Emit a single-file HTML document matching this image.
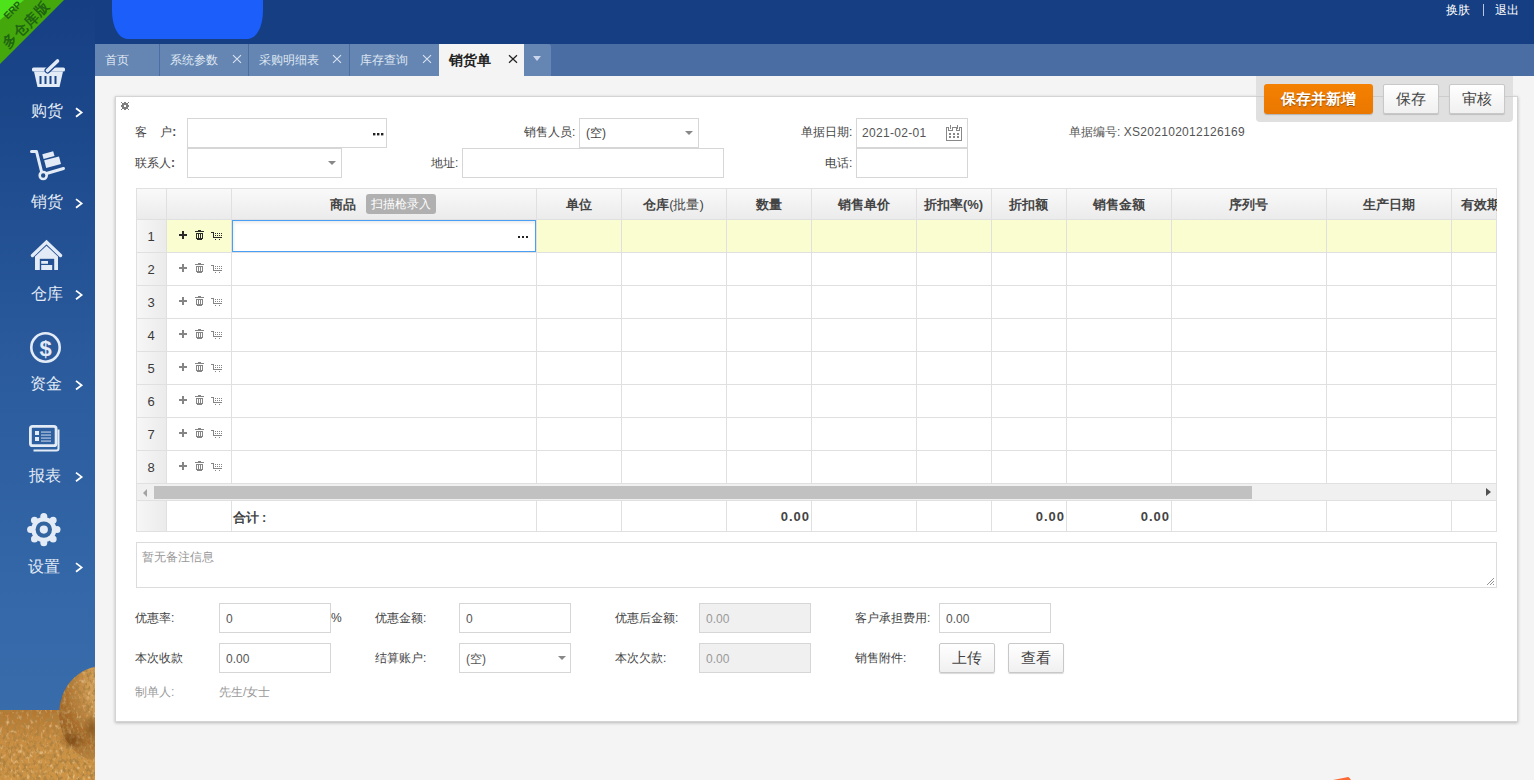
<!DOCTYPE html>
<html><head><meta charset="utf-8">
<style>
*{margin:0;padding:0;box-sizing:border-box}
html,body{width:1534px;height:780px;overflow:hidden}
body{background:#f4f4f4;font-family:"Liberation Sans",sans-serif;font-size:12px;color:#333;position:relative}
.abs{position:absolute}
#top{left:0;top:0;width:1534px;height:44px;background:#163f83}
#blob{left:112px;top:-20px;width:151px;height:59px;background:#1c5efa;border-radius:0 0 15px 15px / 0 0 28px 28px}
.tr{top:3px;color:#fff;font-size:12px;line-height:14px}
#topr{top:3px;right:14px;color:#fff;font-size:12px;line-height:14px}
#side{left:0;top:0;width:95px;height:780px;background:linear-gradient(#163f83 0px,#1d4a8c 150px,#2a5a9c 350px,#3468a8 600px,#3a6eac 780px);overflow:hidden}
#tabbar{left:95px;top:44px;width:1439px;height:32px;background:#4a6da3}
.tab{position:absolute;top:0;height:32px;background:#6586b3;color:#dfe7f2;line-height:32px;padding-left:10px;font-size:12px}
.tab .x{position:absolute;right:6px;top:0;font-size:14px;color:#e8eef6}
#card{left:115px;top:96px;width:1403px;height:626px;background:#fff;border:1px solid #d4d4d4;box-shadow:0 1px 3px rgba(0,0,0,.25)}
.lbl{position:absolute;font-size:12px;color:#444;line-height:14px;white-space:nowrap}
.caret{position:absolute;top:12px;width:0;height:0;border-left:4px solid transparent;border-right:4px solid transparent;border-top:4px solid #888}
.btn-o{background:linear-gradient(#f58102,#ea7700);box-shadow:0 1px 1px rgba(0,0,0,.2);border-radius:3px;color:#fff;font-size:15px;font-weight:bold;text-align:center;line-height:30px;text-shadow:0 1px 1px rgba(0,0,0,.35)}
.btn{background:linear-gradient(#fff,#f0f0f0);border:1px solid #c8c8c8;border-radius:2px;color:#444;font-size:15px;text-align:center;line-height:28px;box-shadow:0 1px 1px rgba(0,0,0,.15)}
.hl{left:0;height:1px;background:#e0e0e0}
.vl{width:1px;background:#e0e0e0}
.th{height:31px;line-height:33px;text-align:center;font-weight:bold;font-size:13px;color:#444}
.badge{background:#b0b0b0;border-radius:3px;color:#fff;font-size:12px;line-height:20px;text-align:center}
.rn{text-align:center;line-height:35px;font-size:13px;color:#3a3a3a}
.tf{height:31px;line-height:33px;font-weight:bold;font-size:13px;color:#444}
.iv{position:absolute;left:6px;top:8px;color:#555;font-size:12px;line-height:14px}
.inp.dis{background:#f0f0f0}
.snav{position:absolute;color:#e3ebf6;font-size:16px;line-height:18px;white-space:nowrap}
.chev{position:absolute;left:74px;width:6px;height:6px;border-right:1.6px solid #fff;border-top:1.6px solid #fff;transform:rotate(45deg)}
.inp{position:absolute;border:1px solid #d6d6d6;background:#fff;height:30px}
</style></head><body>
<div id="top" class="abs"></div>
<div id="blob" class="abs"></div>
<div class="abs tr" style="left:1446px">换肤</div><div class="abs" style="left:1483px;top:4px;width:1px;height:12px;background:#b8c6de"></div><div class="abs tr" style="left:1495px">退出</div>
<div id="side" class="abs">
<svg class="abs" style="left:0;top:0" width="95" height="780" viewBox="0 0 95 780">
<defs>
<linearGradient id="hay" x1="0" y1="0" x2="0" y2="1"><stop offset="0" stop-color="#c8913f"/><stop offset="0.4" stop-color="#d9a85a"/><stop offset="1" stop-color="#c98e3c"/></linearGradient>
<radialGradient id="bale" cx="0.45" cy="0.35" r="0.7"><stop offset="0" stop-color="#e2bb78"/><stop offset="0.6" stop-color="#c99447"/><stop offset="1" stop-color="#9a6424"/></radialGradient>
<filter id="tex"><feTurbulence type="fractalNoise" baseFrequency="0.35" numOctaves="2" seed="3"/><feColorMatrix values="0 0 0 0 0.45  0 0 0 0 0.28  0 0 0 0 0.05  0 0 0 -1.6 0.9"/><feComposite in2="SourceGraphic" operator="in"/></filter>
</defs>
<!-- ERP ribbon -->
<polygon points="0,0 64,0 0,64" fill="#44a80c"/>
<polygon points="0,0 24,0 0,20" fill="#4ee21b"/>
<g transform="translate(12.5,10) rotate(-45)"><text x="0" y="3.5" text-anchor="middle" font-family="Liberation Sans" font-size="10" font-weight="bold" fill="#1f6512">ERP</text></g>
<g transform="translate(26,24) rotate(-45)"><text x="0" y="5" text-anchor="middle" font-size="14" font-weight="bold" fill="#1f6512" letter-spacing="1">多仓库版</text></g>
<!-- basket -->
<g fill="#e3ebf6">
<rect x="32" y="67.5" width="33" height="4" rx="1.5"/>
<path d="M34 71.5H63L59.5 87H37.5Z"/>
</g>
<g fill="#1b468a"><rect x="39.5" y="76" width="2" height="8"/><rect x="44.5" y="76" width="2" height="8"/><rect x="49.5" y="76" width="2" height="8"/><rect x="54.5" y="76" width="2" height="8"/></g>
<path d="M47.5 70.5L57.5 61" stroke="#1b468a" stroke-width="6" stroke-linecap="round"/>
<path d="M47.5 70.5L57.5 61" stroke="#e3ebf6" stroke-width="3.6" stroke-linecap="round"/>
<!-- hand truck -->
<g stroke="#e3ebf6" fill="none" stroke-linecap="round" stroke-linejoin="round">
<path d="M31.5 151.5H36.5L41.5 171.5" stroke-width="3"/>
<path d="M46.5 173.5L63.5 168.5" stroke-width="3"/>
<circle cx="43.2" cy="175.5" r="3.5" stroke-width="2.6"/>
</g>
<g fill="#e3ebf6">
<path d="M42.3 154.2L53.2 151.3L54.5 156L43.6 158.9Z"/>
<path d="M44.2 160.3L59 156.4L61 164L46.2 167.9Z"/>
</g>
<!-- house -->
<path d="M32.5 255.5L46.5 242L60.5 255.5" stroke="#e3ebf6" stroke-width="3.4" fill="none" stroke-linecap="round" stroke-linejoin="miter"/>
<path d="M35 256.5L46.5 245.8L58 256.5V270H35Z" fill="#e3ebf6"/>
<rect x="39.8" y="258.8" width="14.4" height="11.2" fill="#235193"/>
<rect x="41.2" y="261" width="6.8" height="2.8" fill="#e3ebf6"/>
<rect x="41.2" y="265" width="11" height="5" fill="#e3ebf6"/>
<!-- dollar -->
<circle cx="45.5" cy="347.5" r="14.2" stroke="#e3ebf6" stroke-width="2.6" fill="none"/>
<text x="45.5" y="356" text-anchor="middle" font-family="Liberation Sans" font-weight="bold" font-size="22" fill="#e3ebf6">$</text>
<!-- report -->
<path d="M58.5 429.5V448.5a2 2 0 0 1-2 2H33.5" stroke="#e3ebf6" stroke-width="2" fill="none"/>
<rect x="30.4" y="426.4" width="25.7" height="19.2" rx="2.2" stroke="#e3ebf6" stroke-width="2.8" fill="none"/>
<g fill="#e3ebf6"><rect x="35" y="431" width="4" height="4"/><rect x="35" y="437" width="4" height="4"/>
<rect x="41" y="431.6" width="10" height="0.9"/><rect x="41" y="434.6" width="10" height="0.9"/><rect x="41" y="437.6" width="10" height="0.9"/><rect x="41" y="440.6" width="10" height="0.9"/></g>
<!-- gear -->
<g fill="#e3ebf6" transform="translate(43.8,529.6)">
<circle r="12.6"/>
<circle cx="0" cy="-13.2" r="3.5"/><circle cx="0" cy="13.2" r="3.5"/><circle cx="13.2" cy="0" r="3.5"/><circle cx="-13.2" cy="0" r="3.5"/>
<circle cx="9.33" cy="9.33" r="3.5"/><circle cx="-9.33" cy="9.33" r="3.5"/><circle cx="9.33" cy="-9.33" r="3.5"/><circle cx="-9.33" cy="-9.33" r="3.5"/>
<circle r="8.2" fill="#32649f"/>
<circle r="4.1"/>
</g>
<!-- chev --><path d="M76 108.2L81.6 112.5L76 116.8" stroke="#fff" stroke-width="1.8" fill="none"/><path d="M76 199.1L81.6 203.4L76 207.70000000000002" stroke="#fff" stroke-width="1.8" fill="none"/><path d="M76 290.59999999999997L81.6 294.9L76 299.2" stroke="#fff" stroke-width="1.8" fill="none"/><path d="M76 380.9L81.6 385.2L76 389.5" stroke="#fff" stroke-width="1.8" fill="none"/><path d="M76 472.59999999999997L81.6 476.9L76 481.2" stroke="#fff" stroke-width="1.8" fill="none"/><path d="M76 563.1L81.6 567.4L76 571.6999999999999" stroke="#fff" stroke-width="1.8" fill="none"/>
<!-- hay -->
<defs>
<linearGradient id="hay2" x1="0" y1="0" x2="0" y2="1"><stop offset="0" stop-color="#b27630"/><stop offset="0.45" stop-color="#c98e42"/><stop offset="1" stop-color="#cd9446"/></linearGradient>
<radialGradient id="bale2" cx="0.75" cy="0.2" r="0.85"><stop offset="0" stop-color="#e2bc7c"/><stop offset="0.5" stop-color="#cf9a52"/><stop offset="0.82" stop-color="#a86c2a"/><stop offset="1" stop-color="#9c6226"/></radialGradient>
<filter id="tex2" x="0" y="0" width="100%" height="100%"><feTurbulence type="fractalNoise" baseFrequency="0.3 0.22" numOctaves="3" seed="7" result="n"/><feColorMatrix in="n" type="matrix" values="0 0 0 0 0.42  0 0 0 0 0.22  0 0 0 0 0.05  3.4 0 0 0 -1.5" result="d"/><feComposite in="d" in2="SourceAlpha" operator="in"/></filter>
<filter id="tex3" x="0" y="0" width="100%" height="100%"><feTurbulence type="fractalNoise" baseFrequency="0.3 0.2" numOctaves="2" seed="11" result="n"/><feColorMatrix in="n" type="matrix" values="0 0 0 0 0.97  0 0 0 0 0.85  0 0 0 0 0.6  1.6 0 0 0 -0.88" result="d"/><feComposite in="d" in2="SourceAlpha" operator="in"/></filter>
</defs>
<g id="hayshape">
<rect x="0" y="710" width="95" height="70" fill="url(#hay2)"/>
<ellipse cx="103" cy="714" rx="44" ry="48" fill="url(#bale2)"/>
</g>
<linearGradient id="fadeg" x1="0" y1="0" x2="0" y2="1"><stop offset="0" stop-color="#cd9446" stop-opacity="0"/><stop offset="0.6" stop-color="#cd9446" stop-opacity="0.9"/><stop offset="1" stop-color="#cd9446" stop-opacity="1"/></linearGradient><rect x="40" y="742" width="55" height="38" fill="url(#fadeg)"/>
<g filter="url(#tex3)"><rect x="0" y="710" width="95" height="70" fill="#000"/><ellipse cx="103" cy="714" rx="44" ry="48" fill="#000"/></g>
<g filter="url(#tex2)"><rect x="0" y="710" width="95" height="70" fill="#000"/><ellipse cx="103" cy="714" rx="44" ry="48" fill="#000"/></g>
<radialGradient id="shad" cx="0.5" cy="0.5" r="0.5"><stop offset="0" stop-color="#6a3c0c" stop-opacity="0.55"/><stop offset="1" stop-color="#6a3c0c" stop-opacity="0"/></radialGradient><ellipse cx="72" cy="740" rx="14" ry="10" fill="url(#shad)"/><ellipse cx="92" cy="728" rx="10" ry="14" fill="url(#shad)"/>
</svg>
<div class="snav" style="top:102px;left:31px">购货</div>
<div class="snav" style="top:193px;left:31px">销货</div>
<div class="snav" style="top:285px;left:31px">仓库</div>
<div class="snav" style="top:375px;left:30px">资金</div>
<div class="snav" style="top:467px;left:29px">报表</div>
<div class="snav" style="top:558px;left:28px">设置</div>
</div>
<div id="tabbar" class="abs">
<div class="tab" style="left:0;width:64px">首页</div>
<div class="tab" style="left:65px;width:88px">系统参数</div><svg class="abs" style="left:137px;top:10px" width="10" height="10" viewBox="0 0 10 10"><path d="M1 1.2L9 8.8M9 1.2L1 8.8" stroke="#dbe4f2" stroke-width="1.1"/></svg>
<div class="tab" style="left:154px;width:100px">采购明细表</div><svg class="abs" style="left:237px;top:10px" width="10" height="10" viewBox="0 0 10 10"><path d="M1 1.2L9 8.8M9 1.2L1 8.8" stroke="#dbe4f2" stroke-width="1.1"/></svg>
<div class="tab" style="left:255px;width:89px">库存查询</div><svg class="abs" style="left:327px;top:10px" width="10" height="10" viewBox="0 0 10 10"><path d="M1 1.2L9 8.8M9 1.2L1 8.8" stroke="#dbe4f2" stroke-width="1.1"/></svg>
<div class="tab" style="left:344px;width:85px;background:#f4f4f4;color:#222;font-size:14px;font-weight:bold;padding-left:10px">销货单</div><svg class="abs" style="left:413px;top:10px" width="10" height="10" viewBox="0 0 10 10"><path d="M1 1.2L9 8.8M9 1.2L1 8.8" stroke="#222" stroke-width="1.2"/></svg>
<div class="tab" style="left:429px;width:27px;border-radius:0 3px 0 0"></div><div class="abs" style="left:438px;top:12px;width:0;height:0;border-left:4px solid transparent;border-right:4px solid transparent;border-top:5px solid #c9d6ec"></div>
</div>
<div id="card" class="abs"></div>

<svg class="abs" style="left:121px;top:102px" width="8" height="8" viewBox="0 0 8 8" shape-rendering="crispEdges"><g fill="#7d7d7d"><rect x="1" y="1" width="6" height="6"/><rect x="3" y="0" width="2" height="1"/><rect x="3" y="7" width="2" height="1"/><rect x="0" y="3" width="1" height="2"/><rect x="7" y="3" width="1" height="2"/><rect x="0" y="0" width="1" height="1"/><rect x="7" y="0" width="1" height="1"/><rect x="0" y="7" width="1" height="1"/><rect x="7" y="7" width="1" height="1"/></g><rect x="3" y="3" width="2" height="2" fill="#fff"/></svg>
<div class="lbl" style="left:135px;top:125px">客&nbsp;&nbsp;&nbsp;&nbsp;户<b style="font-weight:bold">:</b></div>
<div class="inp" style="left:187px;top:118px;width:200px;height:30px"><svg style="position:absolute;left:185px;top:14px" width="11" height="3" viewBox="0 0 11 3"><rect x="0" y="0" width="2.4" height="2.4" fill="#222"/><rect x="4" y="0" width="2.4" height="2.4" fill="#222"/><rect x="8" y="0" width="2.4" height="2.4" fill="#222"/></svg></div>
<div class="lbl" style="left:135px;top:156px">联系人<b>:</b></div>
<div class="inp" style="left:187px;top:148px;width:155px;height:30px"><span class="caret" style="left:140px"></span></div>
<div class="lbl" style="left:431px;top:156px">地址:</div>
<div class="inp" style="left:462px;top:148px;width:262px;height:30px"></div>
<div class="lbl" style="left:524px;top:125px">销售人员:</div>
<div class="inp" style="left:579px;top:118px;width:120px;height:30px"><span style="position:absolute;left:6px;top:6px;color:#444">(空)</span><span class="caret" style="left:105px"></span></div>
<div class="lbl" style="left:801px;top:125px">单据日期:</div>
<div class="inp" style="left:856px;top:118px;width:112px;height:30px"><span style="position:absolute;left:5px;top:7px;color:#555;letter-spacing:0.3px">2021-02-01</span><svg style="position:absolute;left:88px;top:5px" width="18" height="18" viewBox="0 0 18 18"><path d="M1.5 3.5H3.5V6.5H7V3.5H11V6.5H14.5V3.5H16.5V16.5H1.5Z" stroke="#888" stroke-width="1" fill="none" shape-rendering="crispEdges"/><path d="M5.5 1V4.5M12.5 1V4.5" stroke="#888" stroke-width="1" shape-rendering="crispEdges"/><g fill="#888"><rect x="4" y="9" width="2" height="2"/><rect x="8" y="9" width="2" height="2"/><rect x="12" y="9" width="2" height="2"/><rect x="4" y="12" width="2" height="2"/><rect x="8" y="12" width="2" height="2"/><rect x="12" y="12" width="2" height="2"/></g></svg></div>
<div class="lbl" style="left:825px;top:156px">电话:</div>
<div class="inp" style="left:856px;top:148px;width:112px;height:30px"></div>
<div class="lbl" style="left:1069px;top:125px;color:#555">单据编号: <span style="letter-spacing:0.3px">XS202102012126169</span></div>


<div class="abs" style="left:1256px;top:76px;width:257px;height:46px;background:#e0e0e0;border-radius:0 0 4px 4px"></div>
<div class="abs" style="left:1256px;top:96px;width:257px;height:1px;background:#cdcdcd"></div>
<div class="abs btn-o" style="left:1264px;top:84px;width:109px;height:30px">保存并新增</div>
<div class="abs btn" style="left:1383px;top:84px;width:56px;height:30px">保存</div>
<div class="abs btn" style="left:1449px;top:84px;width:56px;height:30px">审核</div>

<div class="abs" style="left:136px;top:542px;width:1361px;height:46px;border:1px solid #dcdcdc;background:#fff">
<span style="position:absolute;left:5px;top:6px;color:#999;font-size:12px">暂无备注信息</span>
<svg style="position:absolute;right:1px;bottom:1px" width="9" height="9" viewBox="0 0 9 9"><path d="M8 1L1 8M8 4L4 8M8 7L7 8" stroke="#888" stroke-width="0.9"/></svg>
</div>
<div class="lbl" style="left:135px;top:611px">优惠率:</div>
<div class="inp" style="left:219px;top:603px;width:112px;height:30px"><span class="iv">0</span></div>
<div class="lbl" style="left:331px;top:611px">%</div>
<div class="lbl" style="left:375px;top:611px">优惠金额:</div>
<div class="inp" style="left:459px;top:603px;width:112px;height:30px"><span class="iv">0</span></div>
<div class="lbl" style="left:615px;top:611px">优惠后金额:</div>
<div class="inp dis" style="left:699px;top:603px;width:112px;height:30px"><span class="iv" style="color:#999">0.00</span></div>
<div class="lbl" style="left:855px;top:611px">客户承担费用:</div>
<div class="inp" style="left:939px;top:603px;width:112px;height:30px"><span class="iv">0.00</span></div>

<div class="lbl" style="left:135px;top:651px">本次收款</div>
<div class="inp" style="left:219px;top:643px;width:112px;height:30px"><span class="iv">0.00</span></div>
<div class="lbl" style="left:375px;top:651px">结算账户:</div>
<div class="inp" style="left:459px;top:643px;width:112px;height:30px"><span class="iv">(空)</span><span class="caret" style="left:98px"></span></div>
<div class="lbl" style="left:615px;top:651px">本次欠款:</div>
<div class="inp dis" style="left:699px;top:643px;width:112px;height:30px"><span class="iv" style="color:#999">0.00</span></div>
<div class="lbl" style="left:855px;top:651px">销售附件:</div>
<div class="abs btn" style="left:939px;top:643px;width:56px;height:30px">上传</div>
<div class="abs btn" style="left:1008px;top:643px;width:56px;height:30px">查看</div>

<div class="lbl" style="left:135px;top:685px;color:#999">制单人:</div>
<div class="lbl" style="left:219px;top:685px;color:#999">先生/女士</div>

<svg class="abs" style="left:1330px;top:774px" width="24" height="6" viewBox="0 0 24 6"><path d="M3 6L17 3.2Q18.5 2.6 19.5 4L21 6Z" fill="#fb6a35"/></svg>
<!--TABLE-->
<div class="abs" style="left:136px;top:188px;width:1361px;height:344px;overflow:hidden;background:#fff">
<div class="abs" style="left:0;top:0;width:1361px;height:31px;background:linear-gradient(#fafafa,#ebebeb)"></div>
<div class="abs" style="left:0;top:31px;width:30px;height:264px;background:linear-gradient(90deg,#f7f7f7,#ebebeb)"></div>
<div class="abs" style="left:0;top:312px;width:30px;height:31px;background:linear-gradient(90deg,#f7f7f7,#ebebeb)"></div>
<div class="abs" style="left:30px;top:31px;width:1361px;height:33px;background:#f9fdd0"></div>
<div class="abs hl" style="top:0px;width:1361px"></div>
<div class="abs hl" style="top:31px;width:1361px"></div>
<div class="abs hl" style="top:64px;width:1361px"></div>
<div class="abs hl" style="top:97px;width:1361px"></div>
<div class="abs hl" style="top:130px;width:1361px"></div>
<div class="abs hl" style="top:163px;width:1361px"></div>
<div class="abs hl" style="top:196px;width:1361px"></div>
<div class="abs hl" style="top:229px;width:1361px"></div>
<div class="abs hl" style="top:262px;width:1361px"></div>
<div class="abs hl" style="top:295px;width:1361px"></div>
<div class="abs hl" style="top:312px;width:1361px"></div>
<div class="abs hl" style="top:343px;width:1361px"></div>
<div class="abs vl" style="left:0px;top:0;height:295px"></div>
<div class="abs vl" style="left:0px;top:312px;height:31px"></div>
<div class="abs vl" style="left:30px;top:0;height:295px"></div>
<div class="abs vl" style="left:30px;top:312px;height:31px"></div>
<div class="abs vl" style="left:95px;top:0;height:295px"></div>
<div class="abs vl" style="left:95px;top:312px;height:31px"></div>
<div class="abs vl" style="left:400px;top:0;height:295px"></div>
<div class="abs vl" style="left:400px;top:312px;height:31px"></div>
<div class="abs vl" style="left:485px;top:0;height:295px"></div>
<div class="abs vl" style="left:485px;top:312px;height:31px"></div>
<div class="abs vl" style="left:590px;top:0;height:295px"></div>
<div class="abs vl" style="left:590px;top:312px;height:31px"></div>
<div class="abs vl" style="left:675px;top:0;height:295px"></div>
<div class="abs vl" style="left:675px;top:312px;height:31px"></div>
<div class="abs vl" style="left:780px;top:0;height:295px"></div>
<div class="abs vl" style="left:780px;top:312px;height:31px"></div>
<div class="abs vl" style="left:855px;top:0;height:295px"></div>
<div class="abs vl" style="left:855px;top:312px;height:31px"></div>
<div class="abs vl" style="left:930px;top:0;height:295px"></div>
<div class="abs vl" style="left:930px;top:312px;height:31px"></div>
<div class="abs vl" style="left:1035px;top:0;height:295px"></div>
<div class="abs vl" style="left:1035px;top:312px;height:31px"></div>
<div class="abs vl" style="left:1190px;top:0;height:295px"></div>
<div class="abs vl" style="left:1190px;top:312px;height:31px"></div>
<div class="abs vl" style="left:1315px;top:0;height:295px"></div>
<div class="abs vl" style="left:1315px;top:312px;height:31px"></div>
<div class="abs vl" style="left:1360px;top:0;height:295px"></div>
<div class="abs vl" style="left:1360px;top:312px;height:31px"></div>
<div class="abs vl" style="left:0;top:295px;height:17px"></div>
<div class="abs vl" style="left:1360px;top:295px;height:17px"></div>
<div class="abs th" style="left:400px;top:0;width:85px">单位</div>
<div class="abs th" style="left:485px;top:0;width:105px">仓库<span style="font-weight:normal">(批量)</span></div>
<div class="abs th" style="left:590px;top:0;width:85px">数量</div>
<div class="abs th" style="left:675px;top:0;width:105px">销售单价</div>
<div class="abs th" style="left:780px;top:0;width:75px">折扣率(%)</div>
<div class="abs th" style="left:855px;top:0;width:75px">折扣额</div>
<div class="abs th" style="left:930px;top:0;width:105px">销售金额</div>
<div class="abs th" style="left:1035px;top:0;width:155px">序列号</div>
<div class="abs th" style="left:1190px;top:0;width:125px">生产日期</div>
<div class="abs th" style="left:1325px;top:0;width:60px;text-align:left">有效期</div>
<div class="abs th" style="left:194px;top:0;width:30px;text-align:left">商品</div>
<div class="abs badge" style="left:230px;top:6px;width:70px;height:20px">扫描枪录入</div>
<div class="abs rn" style="left:0;top:31px;width:30px;height:33px">1</div>
<div class="abs" style="left:43px;top:42px;line-height:0"><svg width="45" height="11" viewBox="0 0 45 11" shape-rendering="crispEdges"><path d="M3 1h2v3h3v2h-3v3h-2v-3h-3v-2h3z" fill="#2a2a2a"/><rect x="16" y="1" width="9" height="1" fill="#2a2a2a"/><rect x="19" y="0" width="3" height="1" fill="#2a2a2a"/><rect x="17" y="3" width="7" height="6" fill="#2a2a2a"/><rect x="18" y="9" width="5" height="1" fill="#2a2a2a"/><rect x="18" y="4" width="1" height="4" fill="#f9fdd0"/><rect x="20" y="4" width="1" height="4" fill="#f9fdd0"/><rect x="22" y="4" width="1" height="4" fill="#f9fdd0"/><path d="M32 2h3v5h8v1h-9v-5h-2z" fill="#2a2a2a"/><g fill="#2a2a2a"><rect x="36" y="3" width="1" height="1"/><rect x="38" y="3" width="1" height="1"/><rect x="40" y="3" width="1" height="1"/><rect x="42" y="3" width="1" height="1"/><rect x="36" y="5" width="1" height="1"/><rect x="38" y="5" width="1" height="1"/><rect x="40" y="5" width="1" height="1"/><rect x="42" y="5" width="1" height="1"/><rect x="36" y="9" width="1" height="1"/><rect x="40" y="9" width="1" height="1"/></g></svg></div>
<div class="abs rn" style="left:0;top:64px;width:30px;height:33px">2</div>
<div class="abs" style="left:43px;top:75px;line-height:0"><svg width="45" height="11" viewBox="0 0 45 11" shape-rendering="crispEdges"><path d="M3 1h2v3h3v2h-3v3h-2v-3h-3v-2h3z" fill="#858585"/><rect x="16" y="1" width="9" height="1" fill="#858585"/><rect x="19" y="0" width="3" height="1" fill="#858585"/><rect x="17" y="3" width="7" height="6" fill="#858585"/><rect x="18" y="9" width="5" height="1" fill="#858585"/><rect x="18" y="4" width="1" height="4" fill="#fff"/><rect x="20" y="4" width="1" height="4" fill="#fff"/><rect x="22" y="4" width="1" height="4" fill="#fff"/><path d="M32 2h3v5h8v1h-9v-5h-2z" fill="#858585"/><g fill="#858585"><rect x="36" y="3" width="1" height="1"/><rect x="38" y="3" width="1" height="1"/><rect x="40" y="3" width="1" height="1"/><rect x="42" y="3" width="1" height="1"/><rect x="36" y="5" width="1" height="1"/><rect x="38" y="5" width="1" height="1"/><rect x="40" y="5" width="1" height="1"/><rect x="42" y="5" width="1" height="1"/><rect x="36" y="9" width="1" height="1"/><rect x="40" y="9" width="1" height="1"/></g></svg></div>
<div class="abs rn" style="left:0;top:97px;width:30px;height:33px">3</div>
<div class="abs" style="left:43px;top:108px;line-height:0"><svg width="45" height="11" viewBox="0 0 45 11" shape-rendering="crispEdges"><path d="M3 1h2v3h3v2h-3v3h-2v-3h-3v-2h3z" fill="#858585"/><rect x="16" y="1" width="9" height="1" fill="#858585"/><rect x="19" y="0" width="3" height="1" fill="#858585"/><rect x="17" y="3" width="7" height="6" fill="#858585"/><rect x="18" y="9" width="5" height="1" fill="#858585"/><rect x="18" y="4" width="1" height="4" fill="#fff"/><rect x="20" y="4" width="1" height="4" fill="#fff"/><rect x="22" y="4" width="1" height="4" fill="#fff"/><path d="M32 2h3v5h8v1h-9v-5h-2z" fill="#858585"/><g fill="#858585"><rect x="36" y="3" width="1" height="1"/><rect x="38" y="3" width="1" height="1"/><rect x="40" y="3" width="1" height="1"/><rect x="42" y="3" width="1" height="1"/><rect x="36" y="5" width="1" height="1"/><rect x="38" y="5" width="1" height="1"/><rect x="40" y="5" width="1" height="1"/><rect x="42" y="5" width="1" height="1"/><rect x="36" y="9" width="1" height="1"/><rect x="40" y="9" width="1" height="1"/></g></svg></div>
<div class="abs rn" style="left:0;top:130px;width:30px;height:33px">4</div>
<div class="abs" style="left:43px;top:141px;line-height:0"><svg width="45" height="11" viewBox="0 0 45 11" shape-rendering="crispEdges"><path d="M3 1h2v3h3v2h-3v3h-2v-3h-3v-2h3z" fill="#858585"/><rect x="16" y="1" width="9" height="1" fill="#858585"/><rect x="19" y="0" width="3" height="1" fill="#858585"/><rect x="17" y="3" width="7" height="6" fill="#858585"/><rect x="18" y="9" width="5" height="1" fill="#858585"/><rect x="18" y="4" width="1" height="4" fill="#fff"/><rect x="20" y="4" width="1" height="4" fill="#fff"/><rect x="22" y="4" width="1" height="4" fill="#fff"/><path d="M32 2h3v5h8v1h-9v-5h-2z" fill="#858585"/><g fill="#858585"><rect x="36" y="3" width="1" height="1"/><rect x="38" y="3" width="1" height="1"/><rect x="40" y="3" width="1" height="1"/><rect x="42" y="3" width="1" height="1"/><rect x="36" y="5" width="1" height="1"/><rect x="38" y="5" width="1" height="1"/><rect x="40" y="5" width="1" height="1"/><rect x="42" y="5" width="1" height="1"/><rect x="36" y="9" width="1" height="1"/><rect x="40" y="9" width="1" height="1"/></g></svg></div>
<div class="abs rn" style="left:0;top:163px;width:30px;height:33px">5</div>
<div class="abs" style="left:43px;top:174px;line-height:0"><svg width="45" height="11" viewBox="0 0 45 11" shape-rendering="crispEdges"><path d="M3 1h2v3h3v2h-3v3h-2v-3h-3v-2h3z" fill="#858585"/><rect x="16" y="1" width="9" height="1" fill="#858585"/><rect x="19" y="0" width="3" height="1" fill="#858585"/><rect x="17" y="3" width="7" height="6" fill="#858585"/><rect x="18" y="9" width="5" height="1" fill="#858585"/><rect x="18" y="4" width="1" height="4" fill="#fff"/><rect x="20" y="4" width="1" height="4" fill="#fff"/><rect x="22" y="4" width="1" height="4" fill="#fff"/><path d="M32 2h3v5h8v1h-9v-5h-2z" fill="#858585"/><g fill="#858585"><rect x="36" y="3" width="1" height="1"/><rect x="38" y="3" width="1" height="1"/><rect x="40" y="3" width="1" height="1"/><rect x="42" y="3" width="1" height="1"/><rect x="36" y="5" width="1" height="1"/><rect x="38" y="5" width="1" height="1"/><rect x="40" y="5" width="1" height="1"/><rect x="42" y="5" width="1" height="1"/><rect x="36" y="9" width="1" height="1"/><rect x="40" y="9" width="1" height="1"/></g></svg></div>
<div class="abs rn" style="left:0;top:196px;width:30px;height:33px">6</div>
<div class="abs" style="left:43px;top:207px;line-height:0"><svg width="45" height="11" viewBox="0 0 45 11" shape-rendering="crispEdges"><path d="M3 1h2v3h3v2h-3v3h-2v-3h-3v-2h3z" fill="#858585"/><rect x="16" y="1" width="9" height="1" fill="#858585"/><rect x="19" y="0" width="3" height="1" fill="#858585"/><rect x="17" y="3" width="7" height="6" fill="#858585"/><rect x="18" y="9" width="5" height="1" fill="#858585"/><rect x="18" y="4" width="1" height="4" fill="#fff"/><rect x="20" y="4" width="1" height="4" fill="#fff"/><rect x="22" y="4" width="1" height="4" fill="#fff"/><path d="M32 2h3v5h8v1h-9v-5h-2z" fill="#858585"/><g fill="#858585"><rect x="36" y="3" width="1" height="1"/><rect x="38" y="3" width="1" height="1"/><rect x="40" y="3" width="1" height="1"/><rect x="42" y="3" width="1" height="1"/><rect x="36" y="5" width="1" height="1"/><rect x="38" y="5" width="1" height="1"/><rect x="40" y="5" width="1" height="1"/><rect x="42" y="5" width="1" height="1"/><rect x="36" y="9" width="1" height="1"/><rect x="40" y="9" width="1" height="1"/></g></svg></div>
<div class="abs rn" style="left:0;top:229px;width:30px;height:33px">7</div>
<div class="abs" style="left:43px;top:240px;line-height:0"><svg width="45" height="11" viewBox="0 0 45 11" shape-rendering="crispEdges"><path d="M3 1h2v3h3v2h-3v3h-2v-3h-3v-2h3z" fill="#858585"/><rect x="16" y="1" width="9" height="1" fill="#858585"/><rect x="19" y="0" width="3" height="1" fill="#858585"/><rect x="17" y="3" width="7" height="6" fill="#858585"/><rect x="18" y="9" width="5" height="1" fill="#858585"/><rect x="18" y="4" width="1" height="4" fill="#fff"/><rect x="20" y="4" width="1" height="4" fill="#fff"/><rect x="22" y="4" width="1" height="4" fill="#fff"/><path d="M32 2h3v5h8v1h-9v-5h-2z" fill="#858585"/><g fill="#858585"><rect x="36" y="3" width="1" height="1"/><rect x="38" y="3" width="1" height="1"/><rect x="40" y="3" width="1" height="1"/><rect x="42" y="3" width="1" height="1"/><rect x="36" y="5" width="1" height="1"/><rect x="38" y="5" width="1" height="1"/><rect x="40" y="5" width="1" height="1"/><rect x="42" y="5" width="1" height="1"/><rect x="36" y="9" width="1" height="1"/><rect x="40" y="9" width="1" height="1"/></g></svg></div>
<div class="abs rn" style="left:0;top:262px;width:30px;height:33px">8</div>
<div class="abs" style="left:43px;top:273px;line-height:0"><svg width="45" height="11" viewBox="0 0 45 11" shape-rendering="crispEdges"><path d="M3 1h2v3h3v2h-3v3h-2v-3h-3v-2h3z" fill="#858585"/><rect x="16" y="1" width="9" height="1" fill="#858585"/><rect x="19" y="0" width="3" height="1" fill="#858585"/><rect x="17" y="3" width="7" height="6" fill="#858585"/><rect x="18" y="9" width="5" height="1" fill="#858585"/><rect x="18" y="4" width="1" height="4" fill="#fff"/><rect x="20" y="4" width="1" height="4" fill="#fff"/><rect x="22" y="4" width="1" height="4" fill="#fff"/><path d="M32 2h3v5h8v1h-9v-5h-2z" fill="#858585"/><g fill="#858585"><rect x="36" y="3" width="1" height="1"/><rect x="38" y="3" width="1" height="1"/><rect x="40" y="3" width="1" height="1"/><rect x="42" y="3" width="1" height="1"/><rect x="36" y="5" width="1" height="1"/><rect x="38" y="5" width="1" height="1"/><rect x="40" y="5" width="1" height="1"/><rect x="42" y="5" width="1" height="1"/><rect x="36" y="9" width="1" height="1"/><rect x="40" y="9" width="1" height="1"/></g></svg></div>
<div class="abs" style="left:96px;top:32px;width:304px;height:32px;border:1px solid #4a9ff5;box-shadow:inset 1px 2px 3px rgba(0,0,0,.08);background:#fff"></div>
<svg class="abs" style="left:382px;top:48px" width="10" height="2" viewBox="0 0 10 2"><rect x="0" y="0" width="2" height="2" fill="#222"/><rect x="4" y="0" width="2" height="2" fill="#222"/><rect x="8" y="0" width="2" height="2" fill="#222"/></svg>
<div class="abs" style="left:1px;top:296px;width:1359px;height:16px;background:#f0f0f0"></div>
<div class="abs" style="left:18px;top:298px;width:1098px;height:13px;background:#c1c1c1"></div>
<div class="abs" style="left:7px;top:301px;width:0;height:0;border-top:4px solid transparent;border-bottom:4px solid transparent;border-right:4px solid #a3a3a3"></div>
<div class="abs" style="left:1350px;top:300px;width:0;height:0;border-top:4px solid transparent;border-bottom:4px solid transparent;border-left:5px solid #505050"></div>
<div class="abs tf" style="left:97px;top:312px;padding-top:1px">合计<span style="margin-left:3px">:</span></div>
<div class="abs tf" style="left:575px;width:99px;text-align:right;top:312px;letter-spacing:1px">0.00</div>
<div class="abs tf" style="left:830px;width:99px;text-align:right;top:312px;letter-spacing:1px">0.00</div>
<div class="abs tf" style="left:935px;width:99px;text-align:right;top:312px;letter-spacing:1px">0.00</div>
</div>
<!--/TABLE-->
</body></html>
